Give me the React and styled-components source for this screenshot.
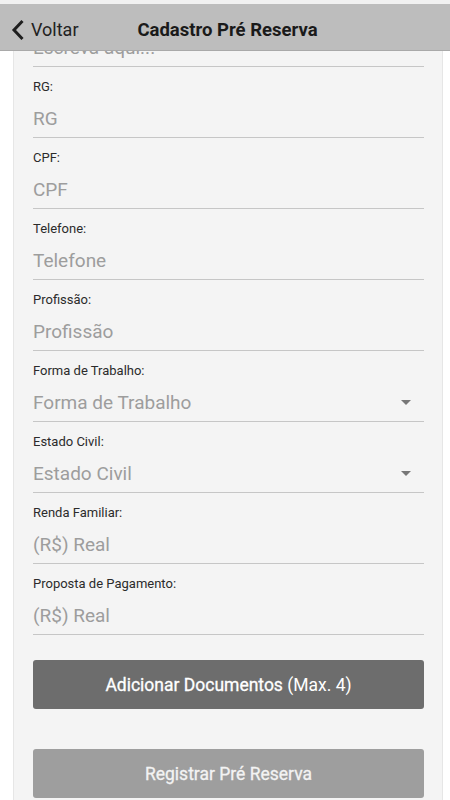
import styled, { createGlobalStyle } from "styled-components";

const GlobalStyle = createGlobalStyle`
  html, body {
    margin: 0;
    padding: 0;
    background: #ffffff;
    font-family: Roboto, "Liberation Sans", sans-serif;
    overflow: hidden;
  }
`;

const fields = [
  { label: "Nome:", placeholder: "Escreva aqui..." },
  { label: "RG:", placeholder: "RG" },
  { label: "CPF:", placeholder: "CPF" },
  { label: "Telefone:", placeholder: "Telefone" },
  { label: "Profissão:", placeholder: "Profissão" },
  { label: "Forma de Trabalho:", placeholder: "Forma de Trabalho", select: true },
  { label: "Estado Civil:", placeholder: "Estado Civil", select: true },
  { label: "Renda Familiar:", placeholder: "(R$) Real" },
  { label: "Proposta de Pagamento:", placeholder: "(R$) Real" },
];

const App = () => {
  return (
    <>
      <GlobalStyle />
      <Header>
        <Back>
          <svg width="14" height="22" viewBox="0 0 14 22">
            <path d="M11.5 2 L3 11 L11.5 20" fill="none" stroke="#1e1e1e" strokeWidth="3" />
          </svg>
          <BackText>Voltar</BackText>
        </Back>
        <Title>Cadastro Pré Reserva</Title>
        <span />
      </Header>
      <Card>
        {fields.map((f, i) => (
          <Field key={i}>
            <Label>{f.label}</Label>
            <InputBox>
              <Placeholder>{f.placeholder}</Placeholder>
              {f.select && <Caret />}
            </InputBox>
          </Field>
        ))}
        <Button $bg="#6d6d6d" $color="#ffffff" $top={25}>
          <Strong>Adicionar Documentos</Strong> (Max. 4)
        </Button>
        <Button $bg="#9e9e9e" $color="#f3f3f3" $top={40}>
          <Strong>Registrar Pré Reserva</Strong>
        </Button>
      </Card>
    </>
  );
};

const Header = styled.header`
  position: fixed;
  top: 4px;
  left: 0;
  right: 0;
  height: 47px;
  z-index: 10;
  background: #bdbdbd;
  border-bottom: 1px solid #a9a9a9;
  display: grid;
  grid-template-columns: 1fr auto 1fr;
  align-items: center;
  padding: 5px 12px 0 11px;
  box-sizing: border-box;
  &::before {
    content: "";
    position: absolute;
    top: -4px;
    left: 0;
    right: 0;
    height: 4px;
    background: #f1f1f1;
  }
`;

const Back = styled.div`
  display: flex;
  align-items: center;
  gap: 6px;
`;

const BackText = styled.span`
  font-size: 18px;
  color: #222222;
`;

const Title = styled.div`
  font-size: 18.5px;
  font-weight: 700;
  color: #1a1a1a;
  transform: translateX(3px);
`;

const Card = styled.main`
  margin: -4px 0 0 13px;
  width: 430px;
  box-sizing: border-box;
  background: #f4f4f4;
  border-left: 1px solid #e6e6e6;
  border-right: 1px solid #e6e6e6;
  padding: 0 18px 40px 19px;
`;

const Field = styled.div`
  padding-top: 12px;
  display: flex;
  flex-direction: column;
  gap: 4px;
  border-bottom: 1px solid #c6c6c6;
`;

const Label = styled.label`
  font-size: 13px;
  line-height: 16px;
  color: #2b2b2b;
`;

const InputBox = styled.div`
  height: 38px;
  display: flex;
  align-items: center;
  justify-content: space-between;
`;

const Placeholder = styled.span`
  font-size: 19px;
  color: #9d9d9d;
`;

const Caret = styled.span`
  width: 0;
  height: 0;
  margin-right: 13px;
  border-left: 5.5px solid transparent;
  border-right: 5.5px solid transparent;
  border-top: 5.5px solid #777777;
`;

const Button = styled.button`
  display: block;
  width: 100%;
  height: 49px;
  margin-top: ${(p) => p.$top}px;
  border: none;
  border-radius: 3px;
  background: ${(p) => p.$bg};
  color: ${(p) => p.$color};
  font-family: Roboto, "Liberation Sans", sans-serif;
  font-size: 17.5px;
  font-weight: 400;
`;

const Strong = styled.span`
  -webkit-text-stroke: 0.3px currentColor;
`;

export default App;
